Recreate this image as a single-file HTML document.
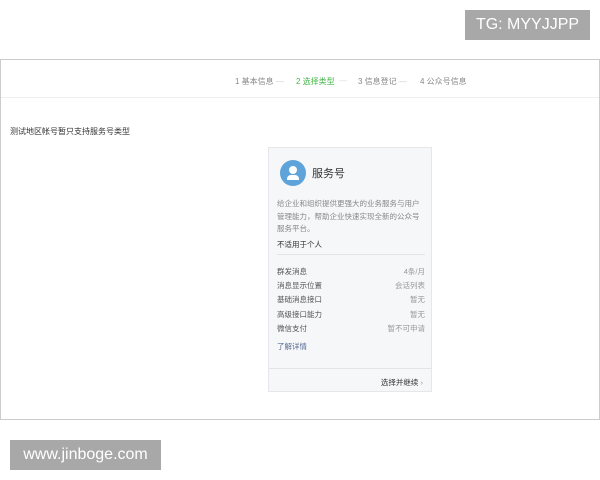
<!DOCTYPE html>
<html><head><meta charset="utf-8"><style>
*{margin:0;padding:0;box-sizing:border-box}
body{width:600px;height:480px;background:#fff;position:relative;overflow:hidden;font-family:"Liberation Sans","Noto Sans CJK SC",sans-serif}
.a{position:absolute;white-space:nowrap}
.tag{background:#a8a8a8;color:#fff;font-size:16px;display:flex;align-items:center;justify-content:center}
.frame{left:0;top:59px;width:600px;height:361px;border:1px solid #ccc}
.hd{left:1px;top:60px;width:598px;height:38px;border-bottom:1px solid #eee}
.s{font-size:8px;color:#888;top:76px}
.card{left:268px;top:147px;width:164px;height:245px;background:#f6f7f9;border:1px solid #e6e7ea}
.t{font-size:7.5px;color:#555}
.row{position:absolute;left:8px;width:148px;height:12px;line-height:12px;font-size:7.5px}
.row .r{position:absolute;right:0;top:0;font-size:7.5px;color:#999;line-height:12px}
</style></head><body>
<div class="a tag" style="left:465px;top:10px;width:125px;height:30px">TG: MYYJJPP</div>
<div class="a frame"></div>
<div class="a hd"></div>
<div class="a s" style="left:235px">1 基本信息 <span style="color:#ccc">—</span></div>
<div class="a s" style="left:296px;color:#44b549">2 选择类型</div>
<div class="a s" style="left:339px;color:#ddd">—</div>
<div class="a s" style="left:358px">3 信息登记 <span style="color:#ccc">—</span></div>
<div class="a s" style="left:420px">4 公众号信息</div>
<div class="a" style="left:10px;top:126px;font-size:8px;color:#333">测试地区帐号暂只支持服务号类型</div>
<div class="a card">
 <div class="a" style="left:11px;top:12px;width:26px;height:26px;border-radius:50%;background:#5ea3d9"></div>
 <div class="a" style="left:20px;top:18px;width:8px;height:8px;border-radius:50%;background:#fff"></div>
 <div class="a" style="left:18px;top:27px;width:12px;height:5px;border-radius:4px 4px 0 0;background:#fff"></div>
 <div class="a" style="left:43px;top:17px;font-size:11px;color:#333">服务号</div>
 <div class="a t" style="left:8px;top:50px;line-height:12.5px;color:#888">给企业和组织提供更强大的业务服务与用户<br>管理能力，帮助企业快速实现全新的公众号<br>服务平台。</div>
 <div class="a t" style="left:8px;top:91px;color:#333">不适用于个人</div>
 <div class="a" style="left:8px;top:106px;width:148px;border-top:1px solid #e4e4e4"></div>
 <div class="row" style="top:118px"><span class="t">群发消息</span><span class="r">4条/月</span></div>
 <div class="row" style="top:132px"><span class="t">消息显示位置</span><span class="r">会话列表</span></div>
 <div class="row" style="top:146px"><span class="t">基础消息接口</span><span class="r">暂无</span></div>
 <div class="row" style="top:161px"><span class="t">高级接口能力</span><span class="r">暂无</span></div>
 <div class="row" style="top:175px"><span class="t">微信支付</span><span class="r">暂不可申请</span></div>
 <div class="row" style="top:193px"><span class="t" style="color:#576b95">了解详情</span></div>
 <div class="a" style="left:0;top:220px;width:162px;border-top:1px solid #e4e4e4"></div>
 <div class="a t" style="right:8px;top:229px;color:#333">选择并继续 <span style="color:#999">›</span></div>
</div>
<div class="a tag" style="left:10px;top:440px;width:151px;height:30px">www.jinboge.com</div>
</body></html>
